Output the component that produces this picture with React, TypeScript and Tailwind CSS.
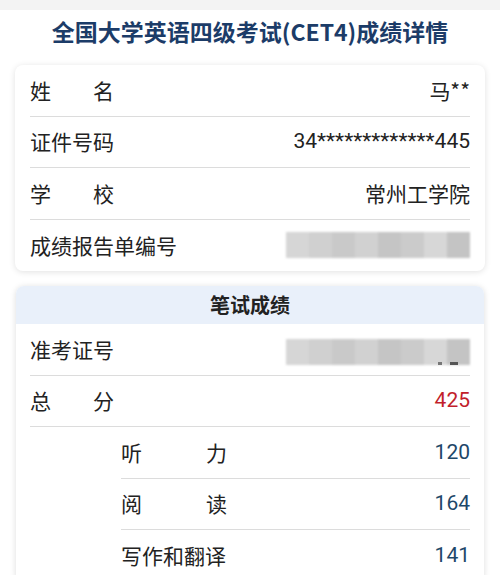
const CJK = "font-['Noto_Sans_CJK_SC',sans-serif]";
const NUM = "font-['Roboto','Noto_Sans_CJK_SC',sans-serif]";

function Label({ text, width }: { text: string; width?: string }) {
  if (!width) return <span className={`${CJK} text-[21px] text-[#222]`}>{text}</span>;
  return (
    <span className={`${CJK} text-[21px] text-[#222] flex justify-between ${width}`}>
      {text.split("").map((c, i) => (
        <span key={i}>{c}</span>
      ))}
    </span>
  );
}

// pixelated / blurred value
function Blur({ tail }: { tail?: boolean }) {
  const shades = ["#d2d2d2", "#cbcbcb", "#c4c4c4", "#cdcdcd", "#bfbfbf", "#c6c6c6", "#d3d3d3", "#bebebe"];
  return (
    <div className="relative w-[184px] h-[26px]">
      <div className="flex h-full blur-[1px] opacity-90">
        {shades.map((s, i) => (
          <div key={i} className="flex-1" style={{ background: s }} />
        ))}
      </div>
      {tail && (
        <div className="absolute right-3 bottom-0 flex gap-2">
          <span className="w-1 h-[3px] bg-[#777] blur-[0.5px]" />
          <span className="w-2 h-[3px] bg-[#555] blur-[0.5px]" />
        </div>
      )}
    </div>
  );
}

function Row({ children, divider = true, inset = false }: { children: React.ReactNode; divider?: boolean; inset?: boolean }) {
  return (
    <div className={`h-[51.5px] flex items-center justify-between ${divider ? "border-b border-[#dcdcdc]" : ""} ${inset ? "ml-[91px]" : ""}`}>
      {children}
    </div>
  );
}

export default function App() {
  return (
    <div className="w-[500px] h-[575px] bg-white overflow-hidden">
      <div className="h-[10px] bg-[#f3f3f3]" />
      <h1 className={`${CJK} text-center text-[23px] font-bold text-[#1c3c68] leading-none pt-[10px] pb-[22px]`}>
        全国大学英语四级考试(CET4)成绩详情
      </h1>

      <div className="mx-[15px] rounded-lg bg-white shadow-[0_1px_6px_rgba(0,0,0,0.12)] px-[15px]">
        <Row>
          <Label text="姓名" width="w-[84px]" />
          <span className={`${CJK} text-[21px] text-[#222]`}>马**</span>
        </Row>
        <Row>
          <Label text="证件号码" />
          <span className={`${NUM} text-[21px] text-[#222]`}>34*************445</span>
        </Row>
        <Row>
          <Label text="学校" width="w-[84px]" />
          <span className={`${CJK} text-[21px] text-[#222]`}>常州工学院</span>
        </Row>
        <Row divider={false}>
          <Label text="成绩报告单编号" />
          <Blur />
        </Row>
      </div>

      <div className="mx-[16px] mt-[15px] rounded-lg bg-white shadow-[0_1px_6px_rgba(0,0,0,0.14)] overflow-hidden">
        <div className={`${CJK} h-[38px] bg-[#e9f0fa] flex items-center justify-center text-[20px] font-bold text-[#222]`}>
          笔试成绩
        </div>
        <div className="px-[14px]">
          <Row>
            <Label text="准考证号" />
            <div className="mt-[6px]">
              <Blur tail />
            </div>
          </Row>
          <Row>
            <Label text="总分" width="w-[84px]" />
            <span className={`${NUM} text-[21px] text-[#c21f2c]`}>425</span>
          </Row>
          <Row inset>
            <Label text="听力" width="w-[106px]" />
            <span className={`${NUM} text-[21px] text-[#1e4769]`}>120</span>
          </Row>
          <Row inset>
            <Label text="阅读" width="w-[106px]" />
            <span className={`${NUM} text-[21px] text-[#1e4769]`}>164</span>
          </Row>
          <Row inset divider={false}>
            <Label text="写作和翻译" />
            <span className={`${NUM} text-[21px] text-[#1e4769]`}>141</span>
          </Row>
        </div>
      </div>
    </div>
  );
}
